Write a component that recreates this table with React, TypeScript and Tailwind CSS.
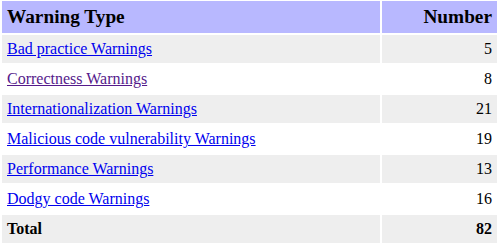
const rows = [
  { label: 'Bad practice Warnings', count: 5, visited: false },
  { label: 'Correctness Warnings', count: 8, visited: true },
  { label: 'Internationalization Warnings', count: 21, visited: false },
  { label: 'Malicious code vulnerability Warnings', count: 19, visited: false },
  { label: 'Performance Warnings', count: 13, visited: false },
  { label: 'Dodgy code Warnings', count: 16, visited: false },
];

export default function App() {
  return (
    <div className="min-h-screen bg-white font-['Liberation_Serif',serif] text-black">
      <table className="mt-[-1px] w-[499px] border-separate border-spacing-[2px]">
        <thead>
          <tr className="bg-[#b8b8ff]">
            <th className="h-[32px] px-[5px] text-left text-[19.3px] font-bold">Warning Type</th>
            <th className="h-[32px] w-[115px] px-[5px] text-right text-[19.3px] font-bold">Number</th>
          </tr>
        </thead>
        <tbody>
          {rows.map((r, i) => (
            <tr key={r.label} className={i % 2 === 0 ? 'bg-[#eeeeee]' : 'bg-white'}>
              <td className="h-[28px] px-[5px] text-[16px]">
                <a
                  href="#"
                  className={r.visited ? 'text-[#551a8b] underline' : 'text-[#0000ee] underline'}
                >
                  {r.label}
                </a>
              </td>
              <td className="h-[28px] px-[5px] text-right text-[16px]">{r.count}</td>
            </tr>
          ))}
          <tr className="bg-[#eeeeee]">
            <td className="h-[28px] px-[5px] text-[16px] font-bold">Total</td>
            <td className="h-[28px] px-[5px] text-right text-[16px] font-bold">82</td>
          </tr>
        </tbody>
      </table>
    </div>
  );
}
